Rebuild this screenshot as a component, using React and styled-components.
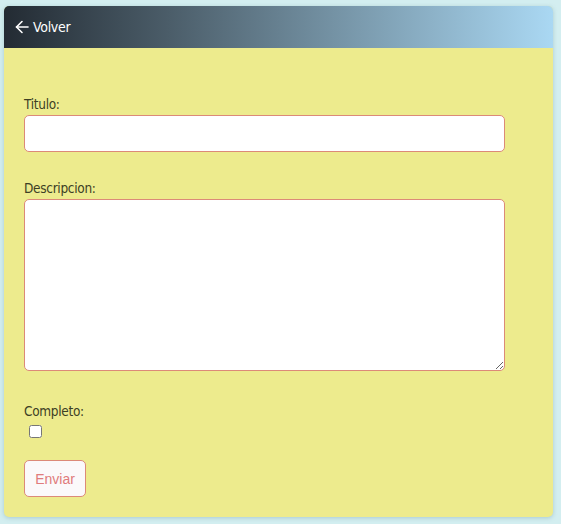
import React from 'react';
import styled, { createGlobalStyle } from 'styled-components';

const GlobalStyle = createGlobalStyle`
    body {
        margin: 0;
        background: #d3eef0;
        font-family: 'Liberation Sans Narrow', 'DejaVu Sans Condensed', 'Liberation Sans', sans-serif;
    }
`;

const Page = styled.div`
    padding: 6px 8px 7px 4px;
`;

const Card = styled.div`
    border-radius: 5px;
    overflow: hidden;
    background: #edeb8d;
    box-shadow: 0 1px 4px rgba(120, 160, 170, 0.45);
`;

const Header = styled.div`
    height: 42px;
    display: flex;
    align-items: center;
    padding: 0 11px;
    background: linear-gradient(90deg, #232b33 0%, #4b5d69 30%, #7b9bae 65%, #aad8f3 100%);
`;

const BackLink = styled.a`
    display: flex;
    align-items: center;
    gap: 4px;
    color: #fff;
    font-size: 14px;
    letter-spacing: -0.3px;
    text-decoration: none;
`;

const Form = styled.form`
    display: flex;
    flex-direction: column;
    padding: 48px 48px 20px 20px;
`;

const Field = styled.div`
    display: flex;
    flex-direction: column;
    margin-bottom: ${props => props.gap || 28}px;
`;

const Label = styled.label`
    color: #3d3f25;
    font-size: 13.5px;
    letter-spacing: -0.3px;
    margin-bottom: 3px;
`;

const Input = styled.input`
    height: 37px;
    box-sizing: border-box;
    border: 1px solid #dc8a78;
    border-radius: 5px;
    background: #fff;
    outline: none;
`;

const TextArea = styled.textarea`
    height: 172px;
    box-sizing: border-box;
    border: 1px solid #dc8a78;
    border-radius: 5px;
    background: #fff;
    outline: none;
`;

const Check = styled.input`
    width: 13px;
    height: 13px;
    margin: 3px 0 0 5px;
`;

const Button = styled.button`
    align-self: flex-start;
    width: 62px;
    height: 37px;
    border: 1px solid #dc8a78;
    border-radius: 5px;
    background: #fbf9fa;
    color: #e07c7c;
    font-family: 'Liberation Sans', sans-serif;
    font-size: 14px;
`;

const ArrowLeft = () => (
    <svg width='14' height='14' viewBox='0 0 14 14' fill='none' stroke='#fff' strokeWidth='1.6' strokeLinecap='round' strokeLinejoin='round'>
        <path d='M13 7H1.5' />
        <path d='M7 1.5L1.5 7L7 12.5' />
    </svg>
);

export default function App() {
    return (
        <Page>
            <GlobalStyle />
            <Card>
                <Header>
                    <BackLink href='#'>
                        <ArrowLeft />
                        Volver
                    </BackLink>
                </Header>
                <Form onSubmit={e => e.preventDefault()}>
                    <Field>
                        <Label>Titulo:</Label>
                        <Input type='text' />
                    </Field>
                    <Field gap={32}>
                        <Label>Descripcion:</Label>
                        <TextArea />
                    </Field>
                    <Field gap={22}>
                        <Label>Completo:</Label>
                        <Check type='checkbox' />
                    </Field>
                    <Button type='submit'>Enviar</Button>
                </Form>
            </Card>
        </Page>
    );
}
